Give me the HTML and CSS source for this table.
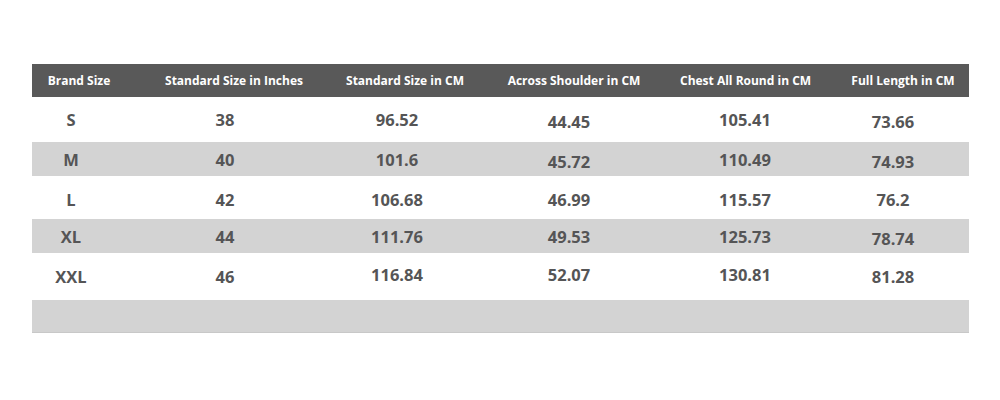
FILE: index.html
```html
<!DOCTYPE html>
<html lang="en">
<head>
<meta charset="utf-8">
<title>Size Chart</title>
<link rel="stylesheet" href="styles.css">
</head>
<body>
<div class="chart">
  <div class="row head">
    <div class="cell c1">Brand Size</div>
    <div class="cell c2">Standard Size in Inches</div>
    <div class="cell c3">Standard Size in CM</div>
    <div class="cell c4">Across Shoulder in CM</div>
    <div class="cell c5">Chest All Round in CM</div>
    <div class="cell c6">Full Length in CM</div>
  </div>
  <div class="row body r1">
    <div class="cell c1">S</div>
    <div class="cell c2">38</div>
    <div class="cell c3">96.52</div>
    <div class="cell c4 low">44.45</div>
    <div class="cell c5">105.41</div>
    <div class="cell c6 low">73.66</div>
  </div>
  <div class="row body r2 alt">
    <div class="cell c1">M</div>
    <div class="cell c2">40</div>
    <div class="cell c3">101.6</div>
    <div class="cell c4 low">45.72</div>
    <div class="cell c5">110.49</div>
    <div class="cell c6 low">74.93</div>
  </div>
  <div class="row body r3">
    <div class="cell c1">L</div>
    <div class="cell c2">42</div>
    <div class="cell c3">106.68</div>
    <div class="cell c4">46.99</div>
    <div class="cell c5">115.57</div>
    <div class="cell c6 low">76.2</div>
  </div>
  <div class="row body r4 alt">
    <div class="cell c1">XL</div>
    <div class="cell c2">44</div>
    <div class="cell c3">111.76</div>
    <div class="cell c4">49.53</div>
    <div class="cell c5">125.73</div>
    <div class="cell c6 low">78.74</div>
  </div>
  <div class="row body r5">
    <div class="cell c1">XXL</div>
    <div class="cell c2">46</div>
    <div class="cell c3 high">116.84</div>
    <div class="cell c4 high">52.07</div>
    <div class="cell c5 high">130.81</div>
    <div class="cell c6">81.28</div>
  </div>
  <div class="row body r6 alt"></div>
</div>
</body>
</html>
```
FILE: styles.css
```css
html, body {
  margin: 0;
  padding: 0;
  background: #ffffff;
}

body {
  font-family: "Open Sans", "Liberation Sans", sans-serif;
  width: 1000px;
  height: 400px;
  overflow: hidden;
}

.chart {
  margin: 64px 0 0 32px;
  width: 937px;
}

.row {
  display: grid;
  grid-template-columns: 94px 216px 126px 212px 126px 163px;
  align-items: center;
}

.cell {
  text-align: center;
  white-space: nowrap;
}

.head {
  background: #595959;
  height: 33px;
  color: #ffffff;
  font-weight: 700;
  font-size: 12px;
  letter-spacing: 0;
}

.head .c6 {
  padding-left: 31px;
}

.body {
  color: #555556;
  font-weight: 700;
  font-size: 16.5px;
}

.alt {
  background: #d3d3d3;
}

.r1 { height: 45px; }
.r2 { height: 34px; }
.r3 { height: 43px; }
.r4 { height: 34px; }
.r5 { height: 47px; }
.r6 { height: 33px; border-bottom: 1px solid #c8c8c8; box-sizing: border-box; }

.body .c1 { padding-right: 16px; }
.body .c2 { padding-right: 18px; }
.body .c3 { padding-right: 16px; }
.body .c4 { padding-right: 10px; }
.body .c5 { padding-left: 4px; }
.body .c6 { padding-left: 11px; }

.body .low { padding-top: 4px; }
.body .high { padding-bottom: 4px; }
.r3 .cell { padding-top: 3px; }
```
